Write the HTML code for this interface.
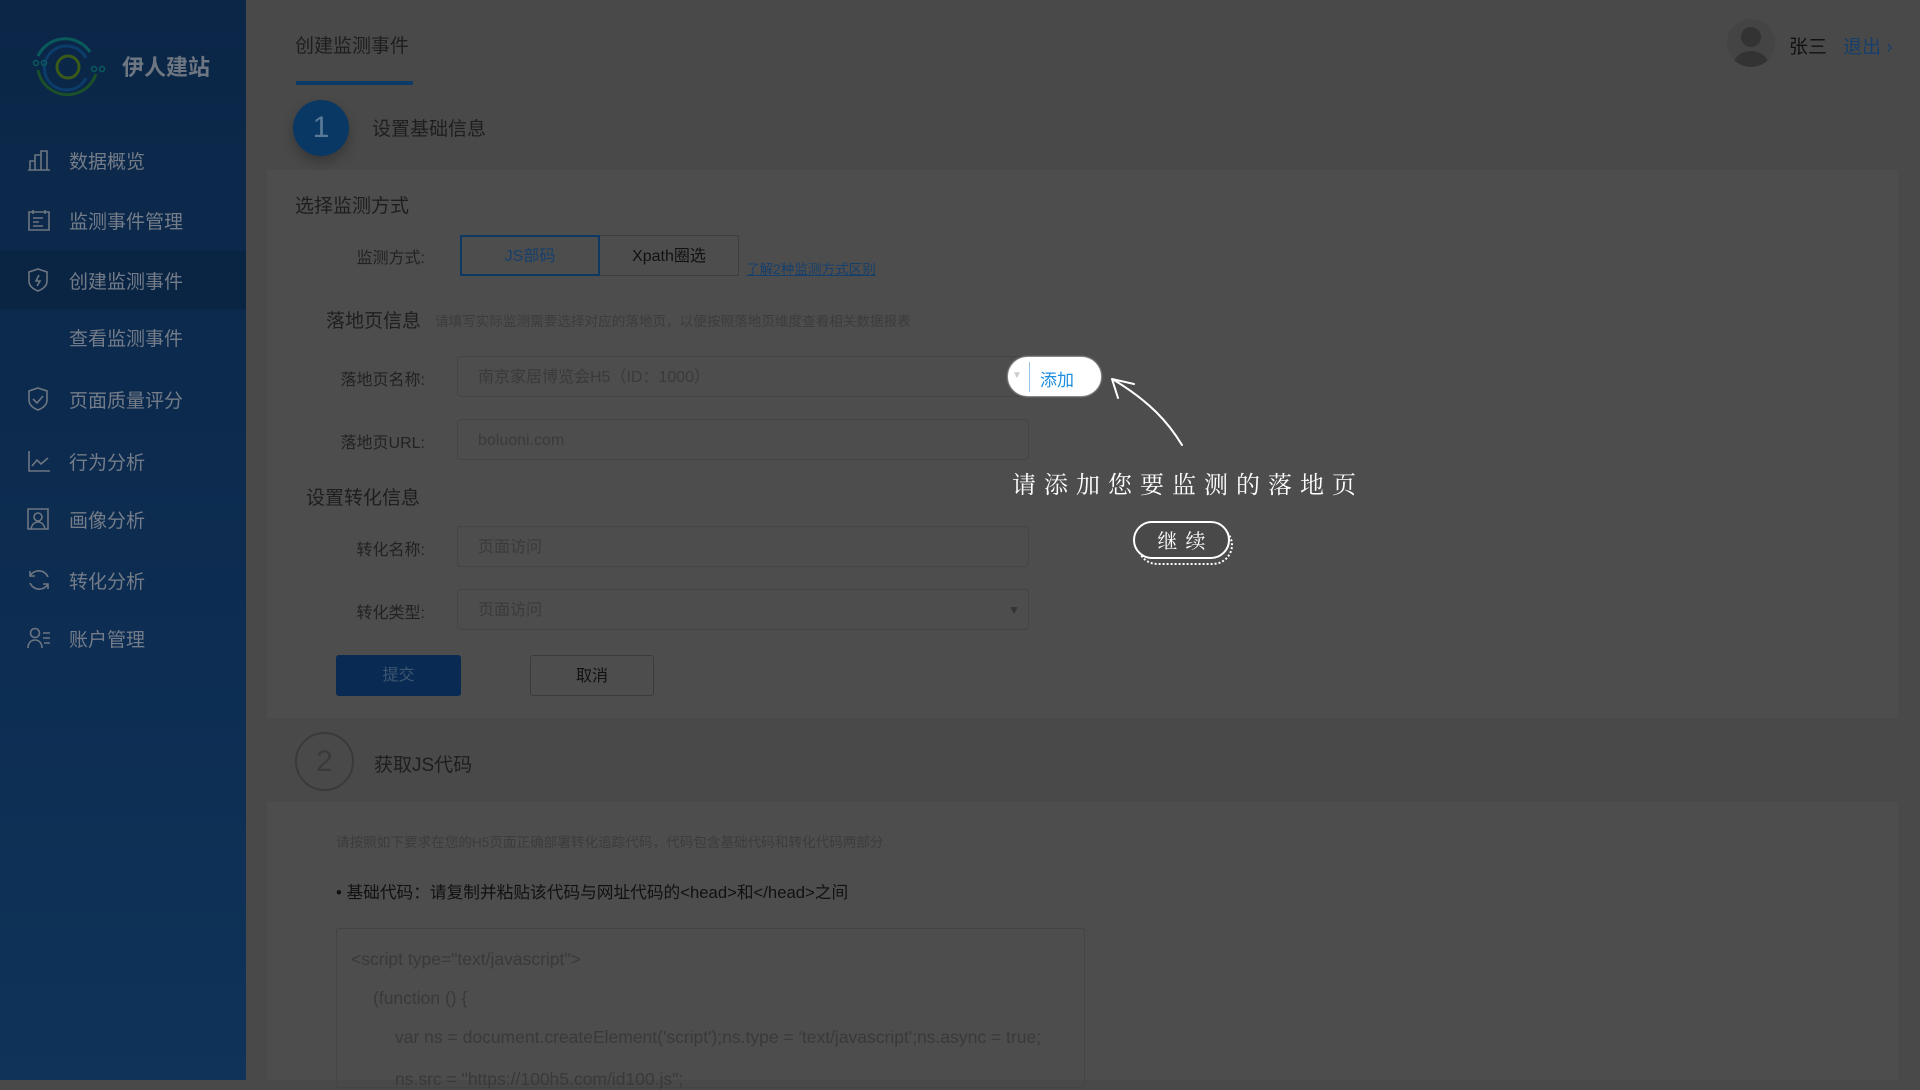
<!DOCTYPE html>
<html><head><meta charset="utf-8"><style>
*{margin:0;padding:0;box-sizing:border-box}
body{width:1920px;height:1080px;overflow:hidden;background:#494949;font-family:"Liberation Sans","Noto Sans CJK SC",sans-serif;position:relative;color:#1e1e1e}
.abs{position:absolute;white-space:nowrap}
.side{position:absolute;left:0;top:0;width:246px;height:1080px;background:linear-gradient(180deg,#0b2647 0%,#0d2d52 60%,#0f3359 100%)}
.nav{position:absolute;left:0;width:246px;height:58px;display:flex;align-items:center;font-size:19px;color:#737c88}
.nav svg{position:absolute;left:27px}
.nav span{position:absolute;left:69px}
.card{position:absolute;left:267px;width:1631px;background:#4d4d4d}
.lbl{position:absolute;font-size:16px;color:#222;text-align:right;width:160px}
.inp{position:absolute;left:457px;width:572px;height:41px;border:1px solid #444;border-radius:4px;background:#4d4d4d;font-size:16px;color:#3a3a3a;padding-left:20px;line-height:41px}
</style></head><body>
<div class="side">
 <svg class="abs" style="left:30px;top:30px" width="76" height="74" viewBox="0 0 76 74" fill="none">
  <path d="M60 22 A30 30 0 0 0 8 26" stroke="#0a5a5c" stroke-width="3"/>
  <path d="M8 40 A30 30 0 0 0 66 44" stroke="#1a4f2a" stroke-width="3"/>
  <path d="M56 28 A22 22 0 1 0 56 48" stroke="#0b3c6a" stroke-width="3"/>
  <circle cx="38" cy="37" r="11" stroke="#3a5a1a" stroke-width="3"/>
  <circle cx="6" cy="33" r="2.5" stroke="#0a5a5c" stroke-width="1.5"/><circle cx="14" cy="33" r="2.5" stroke="#0a5a5c" stroke-width="1.5"/>
  <circle cx="64" cy="39" r="2.5" stroke="#0a5a5c" stroke-width="1.5"/><circle cx="72" cy="39" r="2.5" stroke="#0a5a5c" stroke-width="1.5"/>
 </svg>
 <div class="abs" style="left:122px;top:50px;font-size:22px;font-weight:bold;color:#6d7681">伊人建站</div>
 <div class="nav" style="top:131px"><svg width="24" height="22" viewBox="0 0 24 22" fill="none" stroke="#6d7681" stroke-width="1.6"><path d="M1 21h22M3 21V12h5v9M8 21V6h6v15M14 21V2h6v19"/></svg><span>数据概览</span></div>
 <div class="nav" style="top:191px"><svg width="24" height="22" viewBox="0 0 24 22" fill="none" stroke="#6d7681" stroke-width="1.6"><path d="M2 3h20v18H2zM6 1v4M18 1v4M6 9h10M6 13h6M6 17h10"/></svg><span>监测事件管理</span></div>
 <div class="nav" style="top:251px;background:#0a2443"><svg width="22" height="24" viewBox="0 0 22 24" fill="none" stroke="#6d7681" stroke-width="1.6"><path d="M11 1l9 3v9c0 5-4 8-9 10C6 21 2 18 2 13V4z M12 7l-3 6h4l-3 5"/></svg><span>创建监测事件</span></div>
 <div class="nav" style="top:308px"><span>查看监测事件</span></div>
 <div class="nav" style="top:370px"><svg width="22" height="24" viewBox="0 0 22 24" fill="none" stroke="#6d7681" stroke-width="1.6"><path d="M11 1l9 3v9c0 5-4 8-9 10C6 21 2 18 2 13V4z M6 12l4 4 6-7"/></svg><span>页面质量评分</span></div>
 <div class="nav" style="top:432px"><svg width="24" height="24" viewBox="0 0 24 24" fill="none" stroke="#6d7681" stroke-width="1.6"><path d="M2 2v20h21M5 17l5-6 4 4 7-6"/></svg><span>行为分析</span></div>
 <div class="nav" style="top:490px"><svg width="22" height="22" viewBox="0 0 22 22" fill="none" stroke="#6d7681" stroke-width="1.6"><path d="M1 1h20v20H1z"/><circle cx="11" cy="9" r="4"/><path d="M4 21c1-5 4-7 7-7s6 2 7 7"/></svg><span>画像分析</span></div>
 <div class="nav" style="top:551px"><svg width="24" height="24" viewBox="0 0 24 24" fill="none" stroke="#6d7681" stroke-width="1.6"><path d="M21 9A10 10 0 0 0 3 8M3 15a10 10 0 0 0 18 1M3 3v5h5M21 21v-5h-5"/></svg><span>转化分析</span></div>
 <div class="nav" style="top:609px"><svg width="24" height="22" viewBox="0 0 24 22" fill="none" stroke="#6d7681" stroke-width="1.6"><circle cx="8" cy="6" r="4.5"/><path d="M1 21c0-5 3-8 7-8s7 3 7 8M16 6h7M16 11h7M17 16h6"/></svg><span>账户管理</span></div>
</div>

<div class="abs" style="left:295px;top:31px;font-size:19px">创建监测事件</div>
<div class="abs" style="left:296px;top:81px;width:117px;height:4px;background:#0e3a68"></div>
<div class="abs" style="left:1727px;top:19px;width:48px;height:48px;border-radius:50%;background:#444;overflow:hidden"><div style="position:absolute;left:14px;top:8px;width:20px;height:20px;border-radius:50%;background:#333"></div><div style="position:absolute;left:6px;top:32px;width:36px;height:30px;border-radius:50%;background:#333"></div></div>
<div class="abs" style="left:1789px;top:32px;font-size:19px;color:#111">张三</div>
<div class="abs" style="left:1843px;top:32px;font-size:19px;color:#163f6c">退出 ›</div>

<div class="abs" style="left:293px;top:100px;width:56px;height:56px;border-radius:50%;background:#093865;box-shadow:0 6px 12px rgba(0,0,0,.25);color:#5a7a98;font-size:30px;text-align:center;line-height:56px">1</div>
<div class="abs" style="left:372px;top:114px;font-size:19px">设置基础信息</div>

<div class="card" style="top:170px;height:548px"></div>
<div class="abs" style="left:295px;top:191px;font-size:19px">选择监测方式</div>
<div class="lbl" style="left:265px;top:244px">监测方式:</div>
<div class="abs" style="left:460px;top:235px;width:140px;height:41px;border:2px solid #0c3863;color:#163f6c;font-size:16px;text-align:center;line-height:40px">JS部码</div>
<div class="abs" style="left:600px;top:235px;width:139px;height:41px;border:1px solid #3e3e3e;border-left:none;font-size:16px;text-align:center;line-height:42px;color:#111">Xpath圈选</div>
<div class="abs" style="left:746px;top:258px;font-size:13.6px;color:#163f6c;text-decoration:underline">了解2种监测方式区别</div>
<div class="abs" style="left:326px;top:306px;font-size:19px">落地页信息</div>
<div class="abs" style="left:435px;top:310px;font-size:13.6px;color:#3c3c3c">请填写实际监测需要选择对应的落地页，以便按照落地页维度查看相关数据报表</div>
<div class="lbl" style="left:265px;top:366px">落地页名称:</div>
<div class="inp" style="top:356px">南京家居博览会H5（ID：1000）</div>
<div class="lbl" style="left:265px;top:429px">落地页URL:</div>
<div class="inp" style="top:419px">boluoni.com</div>
<div class="abs" style="left:306px;top:483px;font-size:19px">设置转化信息</div>
<div class="lbl" style="left:265px;top:536px">转化名称:</div>
<div class="inp" style="top:526px">页面访问</div>
<div class="lbl" style="left:265px;top:599px">转化类型:</div>
<div class="inp" style="top:589px">页面访问<span style="position:absolute;right:8px;top:0;font-size:12px;color:#333">▼</span></div>
<div class="abs" style="left:336px;top:655px;width:125px;height:41px;border-radius:3px;background:#092a52;color:#3d5670;font-size:16px;text-align:center;line-height:41px">提交</div>
<div class="abs" style="left:530px;top:655px;width:124px;height:41px;border-radius:3px;border:1px solid #3a3a3a;color:#111;font-size:16px;text-align:center;line-height:41px">取消</div>

<!-- annotation -->
<div class="abs" style="left:1008px;top:357px;width:93px;height:39px;border-radius:20px;background:#fff;box-shadow:0 0 2px #fff"></div>
<div class="abs" style="left:1012px;top:370px;font-size:10px;color:#ccc">▼</div>
<div class="abs" style="left:1029px;top:362px;width:1px;height:30px;background:#9cc4e8"></div>
<div class="abs" style="left:1040px;top:366px;font-size:17px;color:#1e8ee0">添加</div>
<svg class="abs" style="left:1100px;top:370px" width="100" height="80" viewBox="0 0 100 80" fill="none" stroke="#fff" stroke-width="2" stroke-linecap="round"><path d="M82 75C68 52 50 32 14 10"/><path d="M12 9L18 28M12 9L34 14"/></svg>
<div class="abs" style="left:1012px;top:465px;font-size:24px;letter-spacing:8px;color:#fff;font-family:'Noto Serif CJK SC',serif">请添加您要监测的落地页</div>
<div class="abs" style="left:1137px;top:525px;width:96px;height:40px;border-radius:20px;border:2px dotted #fff"></div>
<div class="abs" style="left:1133px;top:521px;width:97px;height:38px;border-radius:19px;border:2px solid #fff;background:#494949;color:#fff;font-size:20px;letter-spacing:8px;text-align:center;line-height:34px;padding-left:8px;font-family:'Noto Serif CJK SC',serif">继续</div>

<div class="abs" style="left:295px;top:732px;width:59px;height:59px;border-radius:50%;border:2px solid #3a3a3a;color:#3a3a3a;font-size:30px;text-align:center;line-height:55px">2</div>
<div class="abs" style="left:374px;top:750px;font-size:19px">获取JS代码</div>
<div class="card" style="top:802px;height:278px"></div>
<div class="abs" style="left:336px;top:831px;font-size:13.6px;color:#3c3c3c">请按照如下要求在您的H5页面正确部署转化追踪代码，代码包含基础代码和转化代码两部分</div>
<div class="abs" style="left:336px;top:879px;font-size:16.7px;color:#111">• 基础代码：请复制并粘贴该代码与网址代码的&lt;head&gt;和&lt;/head&gt;之间</div>
<div class="abs" style="left:336px;top:928px;width:749px;height:160px;border:1px solid #444;border-radius:3px;font-size:17.5px;color:#393939">
 <div class="abs" style="left:14px;top:20px">&lt;script type="text/javascript"&gt;</div>
 <div class="abs" style="left:36px;top:59px">(function () {</div>
 <div class="abs" style="left:58px;top:98px">var ns = document.createElement('script');ns.type = 'text/javascript';ns.async = true;</div>
 <div class="abs" style="left:58px;top:140px">ns.src = "https://100h5.com/id100.js";</div>
</div>
</body></html>
